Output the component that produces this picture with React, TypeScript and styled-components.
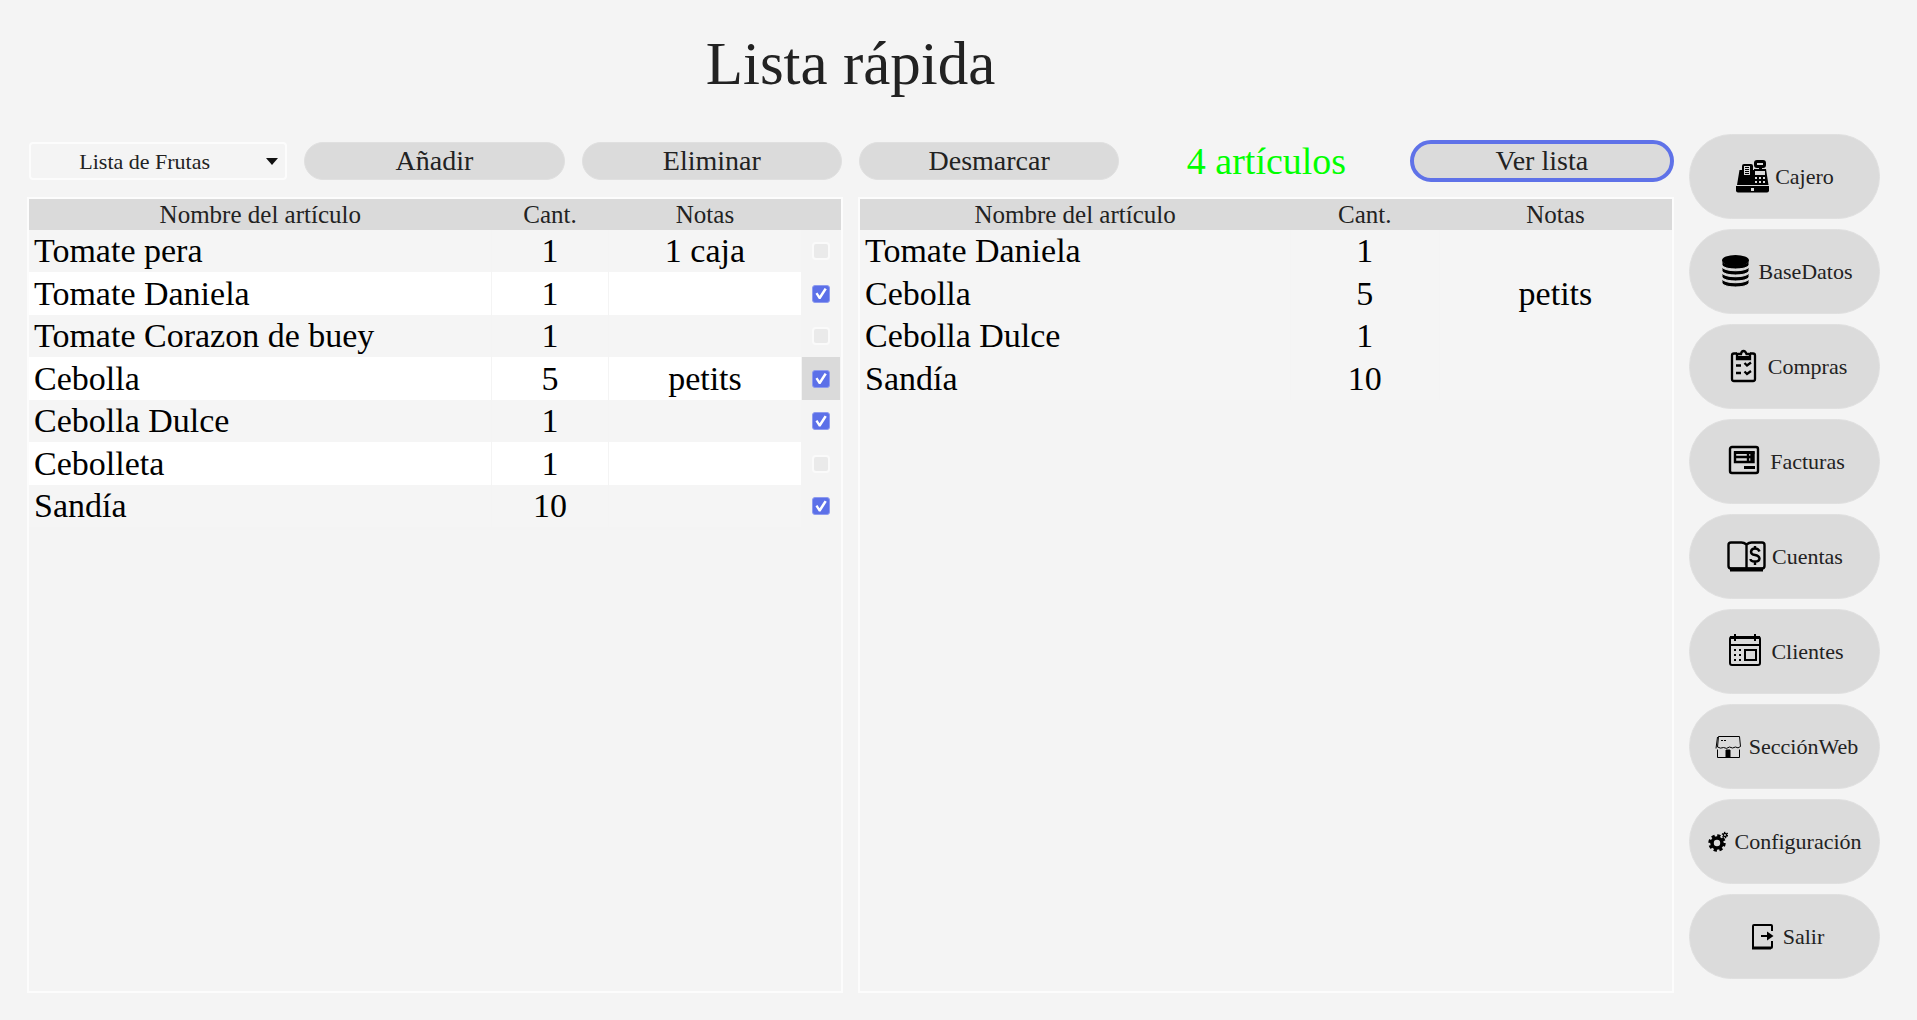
import React, { useState } from "react";
import styled, { createGlobalStyle, css } from "styled-components";

const GlobalStyle = createGlobalStyle`
  *, *::before, *::after { box-sizing: border-box; }
  body {
    margin: 0;
    background: #f4f4f4;
    color: #222;
    font-family: "Liberation Serif", serif;
  }
  button, select, input { font-family: inherit; color: inherit; margin: 0; }
`;

const Page = styled.div`
  display: grid;
  grid-template-columns: minmax(0, 1fr) 191px;
  gap: 15px;
  min-height: 100vh;
  padding: 0 37px 27px 27px;
`;

const Main = styled.main`
  display: flex;
  flex-direction: column;
`;

const Title = styled.h1`
  margin: 0 0 12px;
  font-size: 61px;
  font-weight: 400;
  line-height: 128px;
  text-align: center;
`;

const Toolbar = styled.div`
  display: grid;
  grid-template-columns: repeat(6, minmax(0, 1fr));
  gap: 17px;
  align-items: center;
  height: 42px;
  margin-bottom: 15px;
`;

const SelectBox = styled.div`
  display: grid;
  align-items: center;
  margin-left: 2px;

  > * { grid-area: 1 / 1; }
`;

const ListSelect = styled.select`
  appearance: none;
  width: 100%;
  height: 38px;
  padding: 0 27px 0 0;
  border: 2px solid #fcfcfc;
  border-radius: 4px;
  background: #f4f4f4;
  font-size: 22px;
  text-align: center;
  text-align-last: center;
`;

const Arrow = styled.svg`
  justify-self: end;
  width: 12px;
  height: 7px;
  margin-right: 9px;
  pointer-events: none;
`;

const ToolButton = styled.button<{ $active?: boolean }>`
  height: 38px;
  padding: 0;
  border: 1px solid #e0e0e0;
  border-radius: 21px;
  background: #dbdbdb;
  font-size: 28px;
  line-height: 32px;

  ${(p) =>
    p.$active &&
    css`
      height: 42px;
      margin-left: -4px;
      border: 4px solid #5f72e8;
    `}
`;

const Count = styled.output`
  color: #00ff00;
  font-size: 38px;
  line-height: 42px;
  text-align: center;
`;

const Panels = styled.div`
  display: grid;
  flex: 1;
  grid-template-columns: repeat(2, minmax(0, 1fr));
  gap: 15px;
`;

const Panel = styled.section`
  border: 2px solid #fcfcfc;
`;

const Table = styled.table`
  width: 100%;
  table-layout: fixed;
  border-collapse: collapse;
`;

const Col = styled.col<{ $share: number }>`
  width: ${(p) => p.$share}%;
`;

const Head = styled.th`
  height: 31px;
  padding: 1px 0 0;
  background: #dadada;
  font-size: 25px;
  font-weight: 400;
  line-height: 30px;
`;

const Cell = styled.td<{ $left?: boolean; $selected?: boolean }>`
  height: 43px;
  padding: ${(p) => (p.$left ? "0 0 0 5px" : "0")};
  border-right: 1px solid #f4f4f4;
  background: ${(p) => (p.$selected ? "#dadada" : "inherit")};
  color: #000;
  font-size: 34px;
  line-height: 40px;
  text-align: ${(p) => (p.$left ? "left" : "center")};
`;

const CheckCell = styled(Cell)`
  background: ${(p) => (p.$selected ? "#dadada" : "#f4f4f4")};
  line-height: 0;
`;

const Row = styled.tr<{ $striped?: boolean }>`
  background: #f5f5f5;

  &:nth-child(odd) ${Cell} { height: 42px; }
  &:nth-child(even) { background: ${(p) => (p.$striped ? "#fff" : "#f5f5f5")}; }
`;

const Check = styled.input`
  appearance: none;
  display: inline-grid;
  place-items: center;
  width: 18px;
  height: 18px;
  border: 2px solid #fafafa;
  border-radius: 4px;
  background: #eaeaea;
  vertical-align: bottom;

  &:checked { border: 1px solid #8e9bef; border-radius: 3px; background: #5c70e8; }
  &:checked::after {
    content: "";
    width: 12px;
    height: 12px;
    background: #fff;
    clip-path: polygon(4% 52%, 20% 42%, 38% 68%, 80% 4%, 98% 14%, 46% 96%, 32% 96%);
  }
`;

const Sidebar = styled.nav`
  display: flex;
  flex-direction: column;
  gap: 10px;
  padding-top: 134px;
`;

const NavButton = styled.button`
  display: flex;
  align-items: center;
  justify-content: center;
  gap: 6px;
  height: 85px;
  padding: 0;
  border: 1px solid #e0e0e0;
  border-radius: 43px;
  background: #dbdbdb;
  font-size: 22px;
  line-height: 26px;

  svg { flex: none; color: #000; }
`;

function RegisterIcon() {
  return (
    <svg width="34" height="33" viewBox="0 0 34 33" fill="currentColor" aria-hidden="true">
      <path d="M4.500 10H7V6a2 2 0 0 1 2-2h7a2 2 0 0 1 2 2v4h1V9h5V8h-2a3 3 0 0 1-3-3V3a3 3 0 0 1 3-3h6a3 3 0 0 1 3 3v2a3 3 0 0 1-3 3h-1v1h4l2.500 16H2z" />
      <path d="M1 26h33v4.500a2 2 0 0 1-2 2H3a2 2 0 0 1-2-2z" />
      <path d="M9 6h6v9H9zM22 3h6v2h-6zM20 11h10v4H20zM20 17h2v2h-2zm4 0h2v2h-2zm4 0h2v2h-2zM20 21h2v2h-2zm4 0h2v2h-2zm4 0h2v2h-2zM16 28h3v3h-3z" fill="#dbdbdb" />
      <path d="M10 7h4v1h-4zm0 2h4v1h-4zm0 2h4v1h-4zm0 2h4v1h-4z" />
    </svg>
  );
}

function DatabaseIcon() {
  return (
    <svg width="36" height="35" viewBox="0 0 36 35" fill="currentColor" aria-hidden="true">
      {[18, 12, 6, 0].map((dy) => (
        <path key={dy} transform={`translate(0 ${dy})`} d="M6 7c3 5 24 5 27 0v3.500c0 1.500-3 4.500-13.500 4.500S6 12 6 10.500z" stroke="#dbdbdb" strokeWidth="1" />
      ))}
      <ellipse cx="19.500" cy="6.500" rx="13.500" ry="5.500" />
    </svg>
  );
}

function ClipboardIcon() {
  return (
    <svg width="40" height="35" viewBox="0 0 40 35" fill="none" stroke="currentColor" strokeWidth="2.300" aria-hidden="true">
      <path d="M15 4.500h-3a2 2 0 0 0-2 2V30a2 2 0 0 0 2 2h19a2 2 0 0 0 2-2V6.500a2 2 0 0 0-2-2h-3" />
      <path d="M15 5h4q.5-3 2.500-3t3 3H28v5H15z" />
      <path d="M15 8.500h13" strokeWidth="3" />
      <path d="M14 16.500h5M14 24h5" />
      <path d="M22.500 14l2.500 2.500 4-3M22.500 22.500l2.500 2.500 4-3" />
    </svg>
  );
}

function InvoiceIcon() {
  return (
    <svg width="40" height="35" viewBox="0 0 40 35" fill="none" stroke="currentColor" strokeWidth="2.400" aria-hidden="true">
      <rect x="6" y="3" width="28" height="26" rx="2" />
      <path d="M11 8.500h18.500V18H11zM11 13h19M24 8v10M27.500 8v10" />
      <path d="M10 8.500h20.500" strokeWidth="3" />
      <path d="M20 23.500h11" strokeWidth="3" />
    </svg>
  );
}

function LedgerIcon() {
  return (
    <svg width="40" height="35" viewBox="0 0 40 35" fill="none" stroke="currentColor" strokeWidth="2.400" aria-hidden="true">
      <path d="M20.500 5.500Q18 3.500 15.500 3.500H5a2.500 2.500 0 0 0-2.500 2.500v21q0 2.500 2.500 2.500h31q2.500 0 2.500-2.500V6a2.500 2.500 0 0 0-2.500-2.500H25.500Q23 3.500 20.500 5.500zM20.500 5.500v24" />
      <path d="M4 30.500h33" strokeWidth="4" />
      <path d="M33.500 12.500q-1-3-4.500-3t-4 3.200q0 2.800 4 3.300t4.500 3.500q0 3-4.500 3t-4.500-2.500M29 7v3M29 22v4" />
    </svg>
  );
}

function CalendarIcon() {
  return (
    <svg width="40" height="35" viewBox="0 0 40 35" fill="none" stroke="currentColor" strokeWidth="2" aria-hidden="true">
      <rect x="5" y="3" width="30" height="28" rx="2" />
      <path d="M5 3.500h30" strokeWidth="3" />
      <path d="M10 0v7M30 0v7M5 11h30" />
      <rect x="20" y="16" width="11" height="10" />
      <path d="M9 16h2m3 0h2M9 21h2m3 0h2M9 26h2m3 0h2" />
    </svg>
  );
}

function ShopIcon() {
  return (
    <svg width="32" height="31" viewBox="0 0 32 31" fill="none" stroke="currentColor" aria-hidden="true">
      <path d="M7.500 5.500h21l1 10q-2.500 2.500-5 .5-3 2-6 0-3 2.500-6 .5-3 1.500-6-.5z" />
      <path d="M6.500 6L5 17.500" />
      <path d="M6.500 18.500v8h22v-8M10 9.500h2m1 0h2" />
      <path d="M15 19h4v7h-4z" fill="currentColor" />
    </svg>
  );
}

function GearsIcon() {
  return (
    <svg width="21" height="21" viewBox="0 0 21 21" fill="none" stroke="currentColor" aria-hidden="true">
      <circle cx="10" cy="12" r="5" strokeWidth="3.600" />
      <circle cx="10" cy="12" r="7.400" strokeWidth="2.600" strokeDasharray="3.300 2.510" />
      <circle cx="18" cy="4" r="1.600" strokeWidth="1.400" />
      <circle cx="18" cy="4" r="2.700" strokeWidth="1.200" strokeDasharray="1.400 1.430" />
    </svg>
  );
}

function ExitIcon() {
  return (
    <svg width="32" height="31" viewBox="0 0 32 31" fill="none" stroke="currentColor" strokeWidth="2" aria-hidden="true">
      <path d="M27 10V5q0-1-1-1H9q-1 0-1 1v22h18q1 0 1-1v-6" />
      <path d="M7 27h19" strokeWidth="3" />
      <path d="M16 15h10" />
      <path d="M22 10.500l6.500 4.500-6.500 4.500z" fill="currentColor" stroke="none" />
    </svg>
  );
}

const sections = [
  { label: "Cajero", Icon: RegisterIcon },
  { label: "BaseDatos", Icon: DatabaseIcon },
  { label: "Compras", Icon: ClipboardIcon },
  { label: "Facturas", Icon: InvoiceIcon },
  { label: "Cuentas", Icon: LedgerIcon },
  { label: "Clientes", Icon: CalendarIcon },
  { label: "SecciónWeb", Icon: ShopIcon },
  { label: "Configuración", Icon: GearsIcon },
  { label: "Salir", Icon: ExitIcon },
];

const initialItems = [
  { name: "Tomate pera", amount: 1, notes: "1 caja", marked: false },
  { name: "Tomate Daniela", amount: 1, notes: "", marked: true },
  { name: "Tomate Corazon de buey", amount: 1, notes: "", marked: false },
  { name: "Cebolla", amount: 5, notes: "petits", marked: true },
  { name: "Cebolla Dulce", amount: 1, notes: "", marked: true },
  { name: "Cebolleta", amount: 1, notes: "", marked: false },
  { name: "Sandía", amount: 10, notes: "", marked: true },
];

export default function App() {
  const [items, setItems] = useState(initialItems);
  const [selected, setSelected] = useState(3);
  const marked = items.filter((item) => item.marked);

  const toggle = (index: number) => {
    setSelected(index);
    setItems(items.map((item, i) => (i === index ? { ...item, marked: !item.marked } : item)));
  };

  return (
    <>
      <GlobalStyle />
      <Page>
        <Main>
          <Title>Lista rápida</Title>
          <Toolbar>
            <SelectBox>
              <ListSelect aria-label="Lista" defaultValue="frutas">
                <option value="frutas">Lista de Frutas</option>
              </ListSelect>
              <Arrow viewBox="0 0 12 7" aria-hidden="true">
                <path d="M0 0h12L6 7z" fill="#111" />
              </Arrow>
            </SelectBox>
            <ToolButton type="button">Añadir</ToolButton>
            <ToolButton type="button">Eliminar</ToolButton>
            <ToolButton type="button" onClick={() => setItems(items.map((item) => ({ ...item, marked: false })))}>
              Desmarcar
            </ToolButton>
            <Count>{`${marked.length} artículos`}</Count>
            <ToolButton type="button" $active>
              Ver lista
            </ToolButton>
          </Toolbar>
          <Panels>
            <Panel>
              <Table>
                <colgroup>
                  <Col $share={57} />
                  <Col $share={14.4} />
                  <Col $share={23.8} />
                  <Col $share={4.8} />
                </colgroup>
                <thead>
                  <tr>
                    <Head>Nombre del artículo</Head>
                    <Head>Cant.</Head>
                    <Head>Notas</Head>
                    <Head />
                  </tr>
                </thead>
                <tbody>
                  {items.map((item, index) => (
                    <Row key={item.name} $striped>
                      <Cell $left>{item.name}</Cell>
                      <Cell>{item.amount}</Cell>
                      <Cell>{item.notes}</Cell>
                      <CheckCell $selected={index === selected}>
                        <Check
                          type="checkbox"
                          aria-label={item.name}
                          checked={item.marked}
                          onChange={() => toggle(index)}
                        />
                      </CheckCell>
                    </Row>
                  ))}
                </tbody>
              </Table>
            </Panel>
            <Panel>
              <Table>
                <colgroup>
                  <Col $share={53} />
                  <Col $share={18.4} />
                  <Col $share={28.6} />
                </colgroup>
                <thead>
                  <tr>
                    <Head>Nombre del artículo</Head>
                    <Head>Cant.</Head>
                    <Head>Notas</Head>
                  </tr>
                </thead>
                <tbody>
                  {marked.map((item) => (
                    <Row key={item.name}>
                      <Cell $left>{item.name}</Cell>
                      <Cell>{item.amount}</Cell>
                      <Cell>{item.notes}</Cell>
                    </Row>
                  ))}
                </tbody>
              </Table>
            </Panel>
          </Panels>
        </Main>
        <Sidebar aria-label="Secciones">
          {sections.map(({ label, Icon }) => (
            <NavButton key={label} type="button">
              <Icon />
              {label}
            </NavButton>
          ))}
        </Sidebar>
      </Page>
    </>
  );
}
